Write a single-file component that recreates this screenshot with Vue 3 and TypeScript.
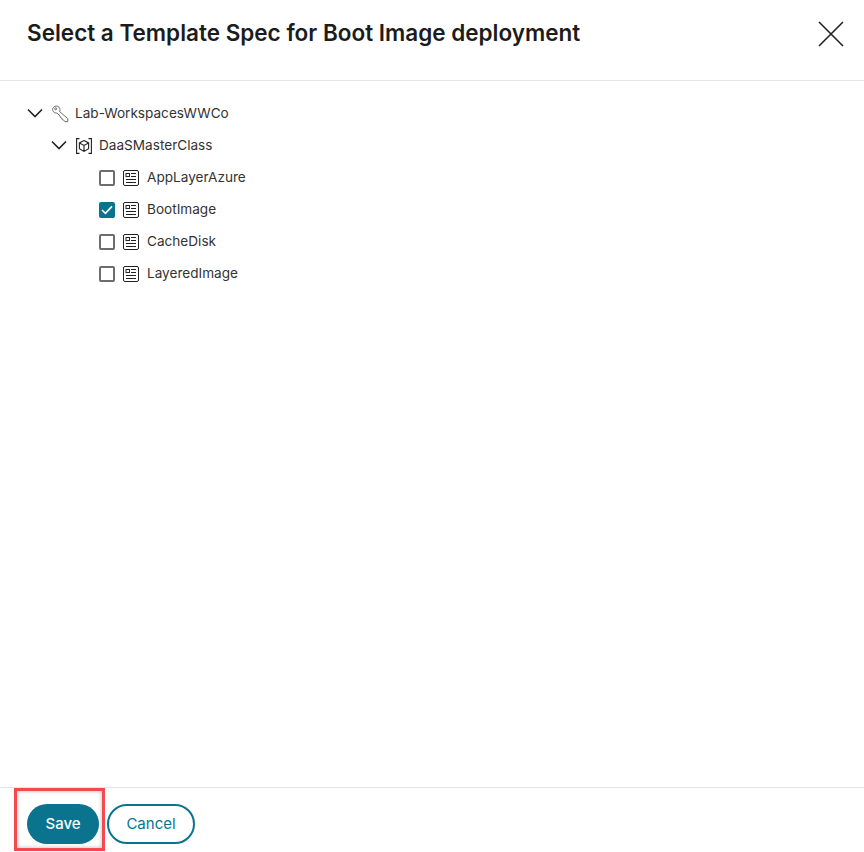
<template>
  <div class="dialog">
    <header class="dialog-header">
      <h2 class="dialog-title">Select a Template Spec for Boot Image deployment</h2>
      <button class="close-btn" aria-label="Close">
        <svg width="26" height="26" viewBox="0 0 26 26">
          <path d="M1 1 L25 25 M25 1 L1 25" stroke="#222" stroke-width="1.6" fill="none" />
        </svg>
      </button>
    </header>

    <main class="dialog-body">
      <!-- subscription -->
      <div class="tree-row">
        <svg class="chevron" width="16" height="10" viewBox="0 0 16 10">
          <path d="M1 1.5 L8 8.5 L15 1.5" stroke="#222" stroke-width="1.6" fill="none" />
        </svg>
        <svg class="node-icon key-icon" width="17" height="18" viewBox="0 0 17 18">
          <g stroke="#6a6a6a" stroke-width="1" fill="none" stroke-linejoin="round">
            <path d="M1.6 2.2 C3 0.6 5.6 0.7 7 2.2 C8.2 3.5 8.3 5.2 7.6 6.6 L15.8 13.6 L15.8 16.6 L12.8 16.6 L11.6 15 L10.2 14.6 L9.8 13 L8.4 12.4 L8 10.8 L4.8 8 C3.6 8.2 2.4 7.8 1.5 6.8 C0.3 5.5 0.3 3.6 1.6 2.2 Z" />
            <circle cx="3.7" cy="3.8" r="1" />
          </g>
        </svg>
        <span class="node-label">Lab-WorkspacesWWCo</span>
      </div>

      <!-- resource group -->
      <div class="tree-row level-1">
        <svg class="chevron" width="16" height="10" viewBox="0 0 16 10">
          <path d="M1 1.5 L8 8.5 L15 1.5" stroke="#222" stroke-width="1.6" fill="none" />
        </svg>
        <svg class="node-icon cube-icon" width="16" height="16" viewBox="0 0 16 16">
          <g stroke="#222" stroke-width="1.1" fill="none">
            <path d="M3.5 0.6 H0.6 V15.4 H3.5 M12.5 0.6 H15.4 V15.4 H12.5" />
            <path d="M8 2.6 L12.6 4.9 V10.8 L8 13.4 L3.4 10.8 V4.9 Z M3.4 4.9 L8 7.4 L12.6 4.9 M8 7.4 V13.4" />
          </g>
        </svg>
        <span class="node-label">DaaSMasterClass</span>
      </div>

      <!-- template specs -->
      <div v-for="spec in specs" :key="spec.name" class="tree-row level-2">
        <span class="checkbox" :class="{ checked: spec.checked }">
          <svg v-if="spec.checked" width="12" height="10" viewBox="0 0 12 10">
            <path d="M1 5 L4.4 8.4 L11 1.4" stroke="#fff" stroke-width="1.6" fill="none" />
          </svg>
        </span>
        <svg class="node-icon doc-icon" width="16" height="16" viewBox="0 0 16 16">
          <g fill="none" stroke="#222" stroke-width="1">
            <rect x="0.5" y="0.5" width="15" height="15" rx="1.5" />
            <rect x="3" y="3.5" width="3.5" height="3" />
            <path d="M8 3.5 H13 M8 6.5 H13 M3 9.5 H13 M3 12.5 H13" />
          </g>
        </svg>
        <span class="node-label">{{ spec.name }}</span>
      </div>
    </main>

    <footer class="dialog-footer">
      <div class="save-highlight">
        <button class="btn btn-primary">Save</button>
      </div>
      <button class="btn btn-secondary">Cancel</button>
    </footer>
  </div>
</template>

<script setup lang="ts">
interface Spec {
  name: string;
  checked: boolean;
}

const specs: Spec[] = [
  { name: "AppLayerAzure", checked: false },
  { name: "BootImage", checked: true },
  { name: "CacheDisk", checked: false },
  { name: "LayeredImage", checked: false }
];
</script>

<style>
html,
body {
  background: #fff;
}
</style>

<style scoped>
.dialog {
  width: 864px;
  height: 852px;
  display: flex;
  flex-direction: column;
  background: #fff;
  color: #222;
  font-family: "Inter", "Noto Sans", sans-serif;
  overflow: hidden;
}

.dialog-header {
  height: 81px;
  flex: none;
  box-sizing: border-box;
  border-bottom: 1px solid #e4e4e4;
  padding: 0 20px 0 27px;
  display: flex;
  justify-content: space-between;
  align-items: flex-start;
}

.dialog-title {
  margin: 19px 0 0;
  font-size: 22.5px;
  line-height: 28px;
  font-weight: 560;
  color: #1c1c1c;
}

.close-btn {
  margin-top: 21px;
  padding: 0;
  border: none;
  background: none;
  width: 26px;
  height: 26px;
}

.dialog-body {
  flex: 1;
  padding: 16px 27px 0;
}

.tree-row {
  height: 32px;
  display: flex;
  align-items: center;
}

.level-1 {
  padding-left: 24px;
}

.level-2 {
  padding-left: 72px;
}

.chevron {
  margin-right: 8px;
  flex: none;
}

.node-icon {
  flex: none;
}

.key-icon {
  margin-right: 6px;
  margin-left: 1px;
  margin-top: 1px;
}

.cube-icon {
  margin-left: 1px;
  margin-right: 7px;
  margin-top: 1px;
}

.doc-icon {
  margin-top: 2px;
  margin-right: 8px;
}

.node-label {
  font-size: 13.6px;
  color: #333;
}

.checkbox {
  width: 16px;
  height: 16px;
  box-sizing: border-box;
  border: 2px solid #6d6d6d;
  border-radius: 2px;
  margin-top: 2px;
  margin-right: 8px;
  display: flex;
  align-items: center;
  justify-content: center;
  flex: none;
}

.checkbox.checked {
  background: #0a748f;
  border-color: #0a748f;
}

.dialog-footer {
  height: 65px;
  flex: none;
  box-sizing: border-box;
  border-top: 1px solid #e4e4e4;
  padding: 8px 0 0 27px;
  display: flex;
  align-items: center;
  gap: 8px;
}

.save-highlight {
  position: relative;
  display: flex;
}

/* red annotation box round the save button */
.save-highlight::after {
  content: "";
  position: absolute;
  left: -13px;
  top: -16px;
  width: 91px;
  height: 63px;
  box-sizing: border-box;
  border: 3px solid #f4494f;
  box-shadow: inset 0 0 4px rgba(0, 0, 0, 0.3);
  pointer-events: none;
}

.btn {
  height: 40px;
  border-radius: 20px;
  font-family: inherit;
  font-size: 15px;
  padding: 0 0 2px;
  box-sizing: border-box;
}

.btn-primary {
  width: 72px;
  background: #0a748f;
  color: #fff;
  border: none;
  font-weight: 500;
}

.btn-secondary {
  width: 88px;
  background: #fff;
  color: #0a748f;
  border: 2px solid #0a748f;
}
</style>
